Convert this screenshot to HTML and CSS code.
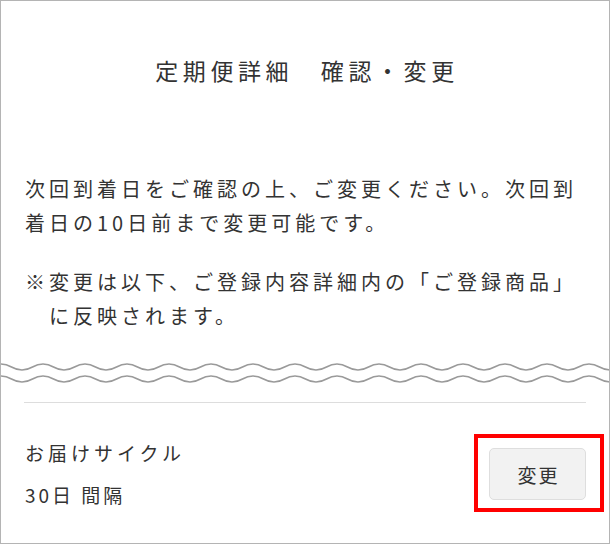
FILE: index.html
```html
<!DOCTYPE html>
<html lang="ja">
<head>
<meta charset="utf-8">
<title>定期便詳細 確認・変更</title>
<link rel="stylesheet" href="styles.css">
</head>
<body>
<div class="frame">
  <h1 class="title">定期便詳細　確認・変更</h1>
  <div class="intro">
    <p class="lead">次回到着日をご確認の上、ご変更ください。次回到着日の10日前まで変更可能です。</p>
    <p class="note">※変更は以下、ご登録内容詳細内の「ご登録商品」に反映されます。</p>
  </div>
  <svg class="wave" width="608" height="24" viewBox="0 0 608 24" aria-hidden="true">
    <defs>
      <pattern id="wv" width="42" height="24" patternUnits="userSpaceOnUse">
        <path d="M0 3 C10.5 3 10.5 9 21 9 C31.5 9 31.5 3 42 3" fill="none" stroke="#9a9a9a" stroke-width="1.6"/>
        <path d="M0 15 C10.5 15 10.5 21 21 21 C31.5 21 31.5 15 42 15" fill="none" stroke="#9a9a9a" stroke-width="1.6"/>
      </pattern>
    </defs>
    <rect x="0" y="0" width="608" height="24" fill="url(#wv)"/>
  </svg>
  <div class="divider"></div>
  <div class="cycle">
    <div class="cycle-info">
      <div class="cycle-label">お届けサイクル</div>
      <div class="cycle-value">30日 間隔</div>
    </div>
    <div class="btn-wrap">
      <button class="btn" type="button">変更</button>
      <span class="highlight"></span>
    </div>
  </div>
</div>
</body>
</html>
```

FILE: styles.css
```css
html, body {
  margin: 0;
  padding: 0;
  background: #ffffff;
}

body {
  font-family: "Noto Sans CJK JP", "Noto Sans", sans-serif;
  color: #333333;
}

.frame {
  box-sizing: border-box;
  width: 610px;
  height: 544px;
  border: 1px solid #b4b4b4;
  display: flex;
  flex-direction: column;
  overflow: hidden;
}

.title {
  margin: 54px 0 0;
  font-size: 23px;
  font-weight: 400;
  line-height: 30px;
  letter-spacing: 4.6px;
  text-align: center;
  padding-left: 4px;
}

.intro {
  padding: 0 20px 0 24px;
  margin-top: 87px;
}

.intro p {
  margin: 0;
  font-size: 20px;
  line-height: 34px;
  letter-spacing: 4px;
}

.note {
  margin-top: 25px !important;
  padding-left: 24px;
  text-indent: -24px;
}

.wave {
  display: block;
  margin-top: 28px;
}

.divider {
  height: 1px;
  background: #dddddd;
  margin: 17px 23px 0 23px;
}

.cycle {
  display: flex;
  align-items: center;
  justify-content: space-between;
  padding: 35px 23px 0 24px;
}

.cycle-info {
  display: flex;
  flex-direction: column;
  gap: 12px;
}

.cycle-label,
.cycle-value {
  font-size: 19px;
  line-height: 30px;
  letter-spacing: 4px;
}

.cycle-value {
  letter-spacing: 3px;
}

.btn-wrap {
  position: relative;
}

.btn {
  box-sizing: border-box;
  width: 97px;
  height: 52px;
  border: 1px solid #dedede;
  border-radius: 5px;
  background: #f2f2f2;
  font-family: inherit;
  font-size: 19px;
  color: #333333;
  letter-spacing: 2px;
  padding: 0 0 0 2px;
}

.highlight {
  position: absolute;
  left: -15px;
  top: -14px;
  right: -18px;
  bottom: -12px;
  border: 4px solid #ff0000;
  pointer-events: none;
}
```
